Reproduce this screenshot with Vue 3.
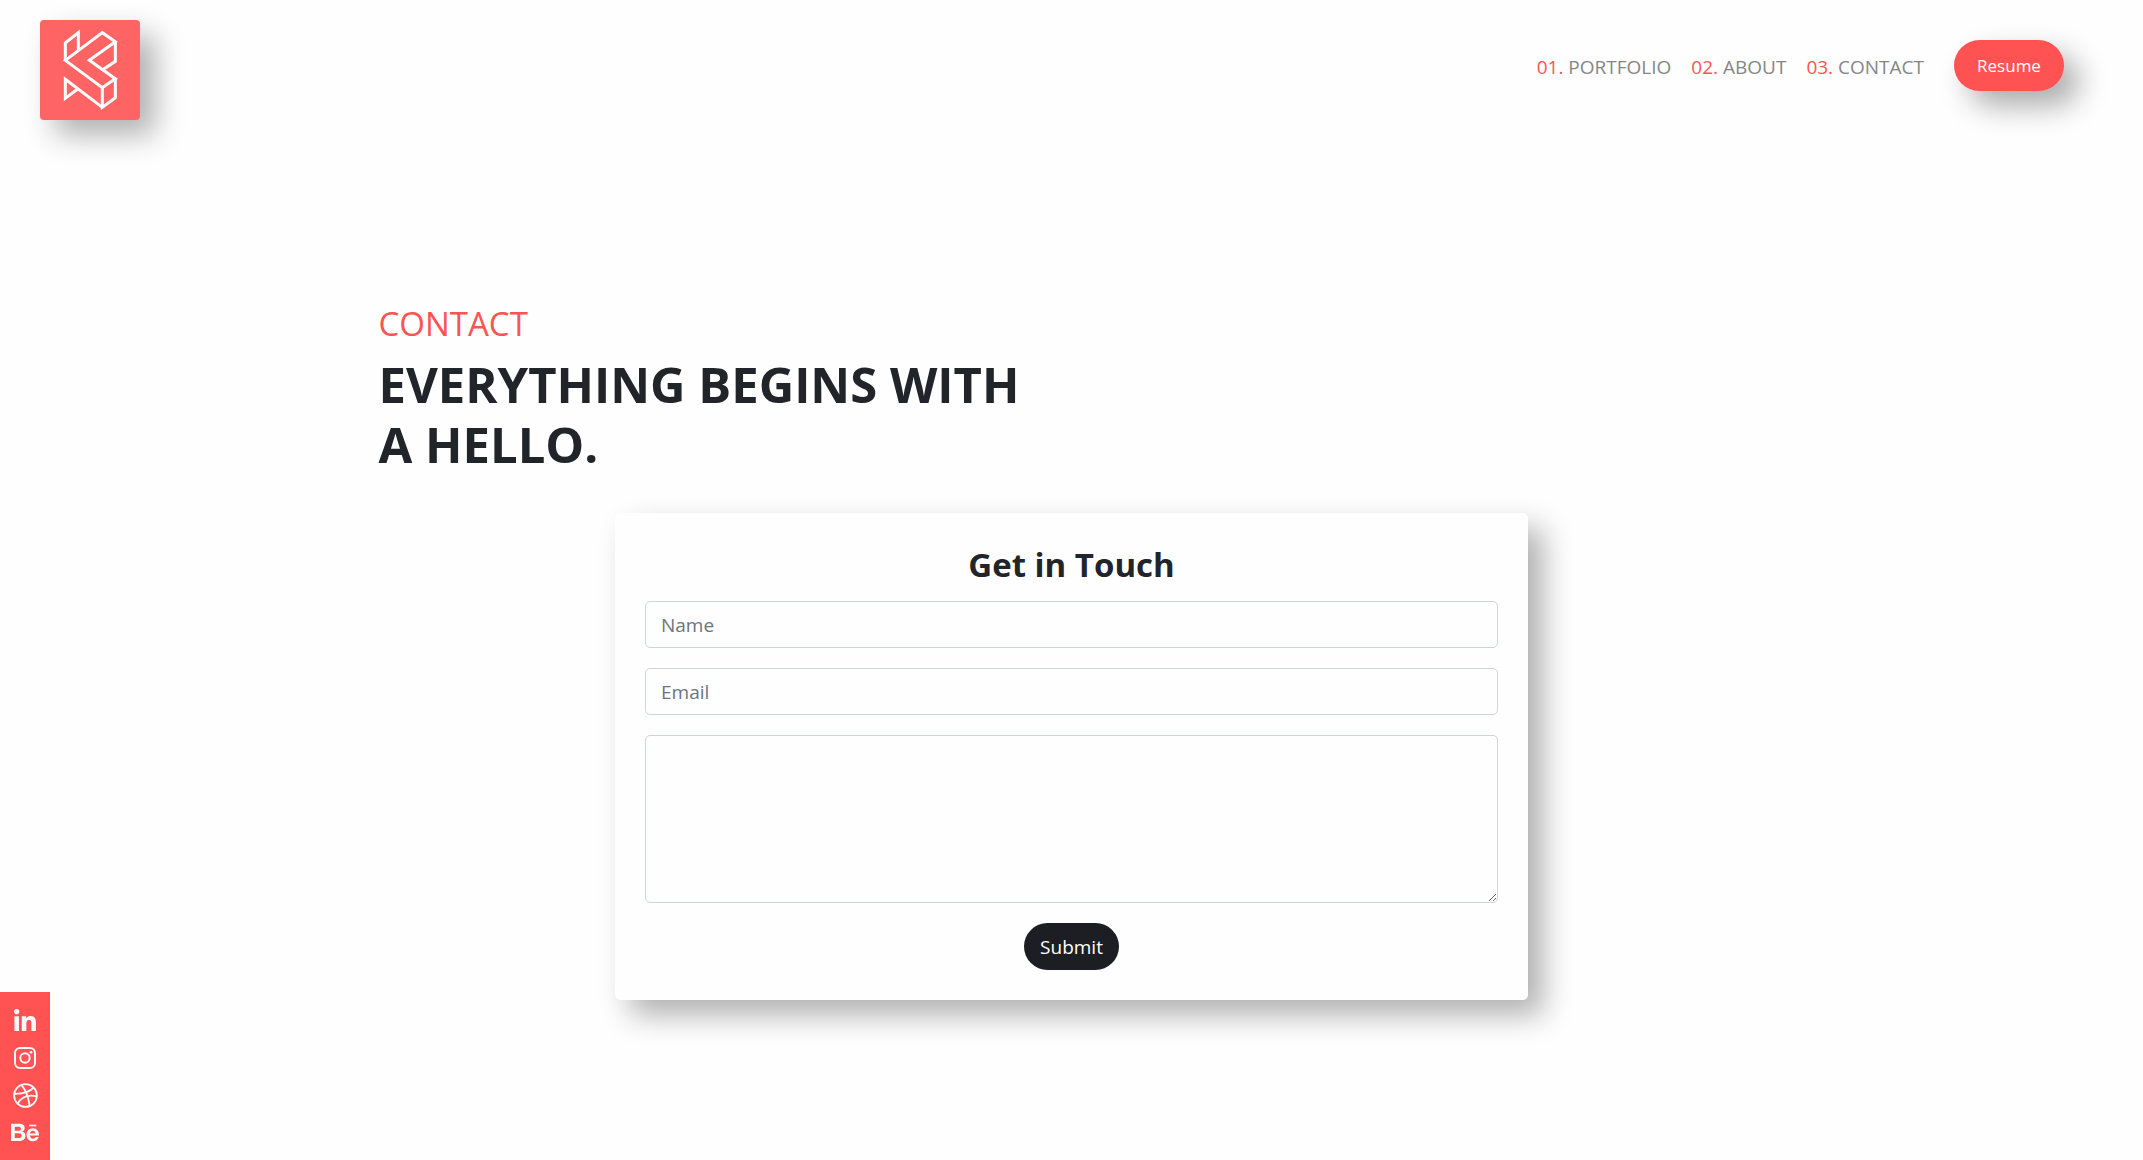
<script setup>
import { ref } from 'vue'

const links = [
  { number: '01.', label: 'PORTFOLIO', href: '#portfolio' },
  { number: '02.', label: 'ABOUT', href: '#about' },
  { number: '03.', label: 'CONTACT', href: '#contact' },
]

const name = ref('')
const email = ref('')
const message = ref('')
</script>

<template>
  <div class="page">
    <header class="topbar">
      <a class="logo" href="#home" aria-label="Home">
        <svg viewBox="0 0 300 300" fill="none" stroke="#fff" stroke-width="9">
          <path d="M76 121V69L115 38V92" />
          <path d="M76 121L187 38L226 65L148 121L226 176L187 203Z" />
          <path d="M226 65V124L188 149" />
          <path d="M226 176V233L187 262V203" />
          <path d="M187 262L76 178V235L113 207" />
        </svg>
      </a>
      <nav class="menu">
        <a v-for="link in links" :key="link.label" class="menu-link" :href="link.href">
          <span class="number">{{ link.number }}</span> {{ link.label }}
        </a>
        <button class="resume" type="button">Resume</button>
      </nav>
    </header>

    <main id="contact" class="content">
      <h2 class="eyebrow">CONTACT</h2>
      <h1 class="headline">EVERYTHING BEGINS WITH<br />A HELLO.</h1>
      <form class="card" @submit.prevent>
        <h3 class="card-title">Get in Touch</h3>
        <input v-model="name" class="field" type="text" placeholder="Name" aria-label="Name" />
        <input v-model="email" class="field" type="email" placeholder="Email" aria-label="Email" />
        <textarea v-model="message" class="field message" aria-label="Message"></textarea>
        <button class="submit" type="submit">Submit</button>
      </form>
    </main>

    <aside class="social">
      <a href="#linkedin" aria-label="LinkedIn">
        <svg width="22" height="25" viewBox="0 0 448 512" fill="currentColor">
          <path d="M100.28 448H7.4V148.9h92.88zM53.79 108.1C24.09 108.1 0 83.5 0 53.8a53.79 53.79 0 0 1 107.58 0c0 29.7-24.1 54.3-53.79 54.3zM447.9 448h-92.68V302.4c0-34.7-.7-79.2-48.29-79.2-48.29 0-55.69 37.7-55.69 76.7V448h-92.78V148.9h89.08v40.8h1.3c12.4-23.5 42.69-48.3 87.88-48.3 94 0 111.28 61.9 111.28 142.3V448z" />
        </svg>
      </a>
      <a href="#instagram" aria-label="Instagram">
        <svg width="22" height="25" viewBox="0 0 22 25" fill="none" stroke="currentColor" stroke-width="2">
          <rect x="1" y="2" width="20" height="20" rx="5" />
          <circle cx="11" cy="12" r="4.7" />
          <circle cx="17" cy="6.3" r="1.4" fill="currentColor" stroke="none" />
        </svg>
      </a>
      <a href="#dribbble" aria-label="Dribbble">
        <svg width="25" height="25" viewBox="0 0 25 25" fill="none" stroke="currentColor" stroke-width="1.8">
          <circle cx="12.5" cy="12.5" r="11.4" />
          <path d="M8.5 2.2C12.6 7 15.5 14 16.7 23.1" />
          <path d="M1.2 10.8C9 10.9 16.5 9.7 20.5 4.4" />
          <path d="M4.7 20.7C8 14.5 14.5 11.2 23.8 13.3" />
        </svg>
      </a>
      <a href="#behance" aria-label="Behance">
        <svg width="28" height="25" viewBox="0 0 576 512" fill="currentColor">
          <path d="M232 237.2c31.8-15.2 48.4-38.2 48.4-74 0-70.6-52.6-87.8-113.3-87.8H0v354.4h171.8c64.4 0 124.9-30.9 124.9-102.9 0-44.5-21.1-77.4-64.7-89.7zM77.9 135.9H151c28.1 0 53.4 7.9 53.4 40.5 0 30.1-19.7 42.2-47.5 42.2h-79v-82.7zm83.3 233.7H77.9V272h84.9c34.3 0 56 14.3 56 50.6 0 35.8-25.9 47-57.6 47zm358.5-240.7H376V94h143.7v34.9zM576 305.2c0-75.9-44.4-139.2-124.9-139.2-78.2 0-131.3 58.8-131.3 135.8 0 79.9 50.3 134.7 131.3 134.7 61.3 0 101-27.6 120.1-86.3H509c-6.7 21.9-34.3 33.5-55.7 33.5-41.3 0-63-24.2-63-65.3h185.1c.3-4.2.6-8.7.6-13.2zM390.4 274c2.3-33.7 24.7-54.8 58.5-54.8 35.4 0 53.2 20.8 56.2 54.8H390.4z" />
        </svg>
      </a>
    </aside>
  </div>
</template>

<style>
body {
  margin: 0;
  background: #fefefe;
}
</style>

<style scoped>
.page {
  min-height: 100vh;
  font-family: "Open Sans", "Noto Sans", sans-serif;
  font-size: 19px;
  line-height: 30px;
  color: #212529;
}

.topbar {
  display: flex;
  justify-content: space-between;
  align-items: flex-start;
  padding: 20px 79px 0 40px;
}

.logo {
  width: 100px;
  height: 100px;
  border-radius: 4px;
  background: #ff6464;
  box-shadow: 15px 15px 30px rgba(0, 0, 0, 0.31);
}

.logo svg {
  display: block;
}

.menu {
  display: flex;
  align-items: center;
  gap: 20px;
  margin-top: 20px;
}

.menu-link {
  padding-top: 2px;
  color: #868686;
  text-decoration: none;
}

.number {
  color: #ff5353;
}

.resume {
  width: 110px;
  height: 51px;
  margin-left: 10px;
  padding: 0;
  border: 0;
  border-radius: 26px;
  background: #ff5353;
  box-shadow: 15px 15px 30px rgba(0, 0, 0, 0.33);
  color: #fff;
  font-family: inherit;
  font-size: 17px;
}

.content {
  max-width: 1386px;
  margin: 182px auto 0;
}

.eyebrow {
  margin: 0 0 9px;
  font-size: 33px;
  line-height: 43px;
  font-weight: 400;
  color: #ff5353;
}

.headline {
  margin: 0 0 39px;
  font-size: 49px;
  line-height: 60px;
  font-weight: 700;
}

.card {
  display: flex;
  flex-direction: column;
  gap: 20px;
  box-sizing: border-box;
  max-width: 913px;
  margin: 0 auto;
  padding: 30px;
  border-radius: 5px;
  background: #fefefe;
  box-shadow: 15px 15px 30px rgba(0, 0, 0, 0.31);
}

.card-title {
  margin: 0 0 -6px;
  font-size: 33px;
  line-height: 44px;
  font-weight: 700;
  text-align: center;
}

.field {
  box-sizing: border-box;
  width: 100%;
  height: 47px;
  padding: 8px 15px;
  border: 1px solid #ced4da;
  border-radius: 5px;
  background: #fefefe;
  color: #495057;
  font: inherit;
}

.field::placeholder {
  color: #6c757d;
  opacity: 1;
}

.message {
  display: block;
  height: 168px;
  resize: vertical;
}

.submit {
  align-self: center;
  width: 95px;
  height: 47px;
  padding: 0;
  border: 0;
  border-radius: 24px;
  background: #1d1e24;
  color: #fff;
  font: inherit;
}

.social {
  position: fixed;
  left: 0;
  bottom: 0;
  display: flex;
  flex-direction: column;
  align-items: center;
  gap: 12px;
  box-sizing: border-box;
  width: 50px;
  padding: 17px 0 15px;
  background: #ff5353;
}

.social a {
  color: #f8f9fa;
}

.social svg {
  display: block;
}
</style>
